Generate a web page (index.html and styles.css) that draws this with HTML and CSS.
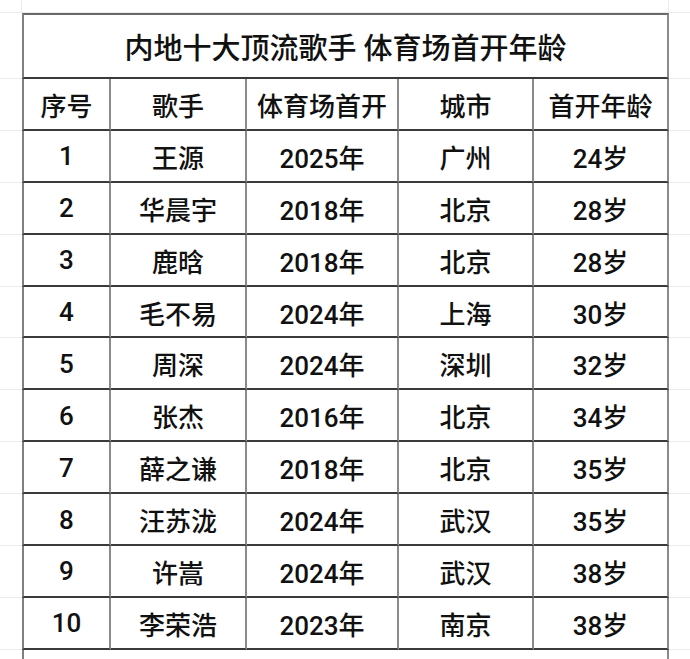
FILE: index.html
```html
<!DOCTYPE html>
<html lang="zh">
<head>
<meta charset="utf-8">
<link rel="stylesheet" href="styles.css">
</head>
<body>
<div class="sheet">
  <div class="row top"><div class="lead"></div><div class="edge"></div></div>
  <div class="row title-row"><div class="lead"></div><div class="cell title">内地十大顶流歌手 体育场首开年龄</div></div>
  <div class="row"><div class="lead"></div><div class="cell c1">序号</div><div class="cell c2">歌手</div><div class="cell c3">体育场首开</div><div class="cell c4">城市</div><div class="cell c5">首开年龄</div></div>
  <div class="row"><div class="lead"></div><div class="cell c1">1</div><div class="cell c2">王源</div><div class="cell c3">2025年</div><div class="cell c4">广州</div><div class="cell c5">24岁</div></div>
  <div class="row"><div class="lead"></div><div class="cell c1">2</div><div class="cell c2">华晨宇</div><div class="cell c3">2018年</div><div class="cell c4">北京</div><div class="cell c5">28岁</div></div>
  <div class="row"><div class="lead"></div><div class="cell c1">3</div><div class="cell c2">鹿晗</div><div class="cell c3">2018年</div><div class="cell c4">北京</div><div class="cell c5">28岁</div></div>
  <div class="row"><div class="lead"></div><div class="cell c1">4</div><div class="cell c2">毛不易</div><div class="cell c3">2024年</div><div class="cell c4">上海</div><div class="cell c5">30岁</div></div>
  <div class="row"><div class="lead"></div><div class="cell c1">5</div><div class="cell c2">周深</div><div class="cell c3">2024年</div><div class="cell c4">深圳</div><div class="cell c5">32岁</div></div>
  <div class="row"><div class="lead"></div><div class="cell c1">6</div><div class="cell c2">张杰</div><div class="cell c3">2016年</div><div class="cell c4">北京</div><div class="cell c5">34岁</div></div>
  <div class="row"><div class="lead"></div><div class="cell c1">7</div><div class="cell c2">薛之谦</div><div class="cell c3">2018年</div><div class="cell c4">北京</div><div class="cell c5">35岁</div></div>
  <div class="row"><div class="lead"></div><div class="cell c1">8</div><div class="cell c2">汪苏泷</div><div class="cell c3">2024年</div><div class="cell c4">武汉</div><div class="cell c5">35岁</div></div>
  <div class="row"><div class="lead"></div><div class="cell c1">9</div><div class="cell c2">许嵩</div><div class="cell c3">2024年</div><div class="cell c4">武汉</div><div class="cell c5">38岁</div></div>
  <div class="row"><div class="lead"></div><div class="cell c1">10</div><div class="cell c2">李荣浩</div><div class="cell c3">2023年</div><div class="cell c4">南京</div><div class="cell c5">38岁</div></div>
  <div class="row tail"><div class="lead"></div><div class="cell wide"></div></div>
</div>
</body>
</html>
```
FILE: styles.css
```css
html, body {
  margin: 0;
  padding: 0;
  background: #ffffff;
  overflow: hidden;
}
body {
  width: 690px;
  height: 659px;
  font-family: Roboto, "Noto Sans CJK SC", sans-serif;
  font-weight: 500;
  color: #111111;
}
.sheet {
  display: flex;
  flex-direction: column;
}
.row {
  display: flex;
  height: 51.9px;
  background: linear-gradient(to top, #ebebeb 1px, transparent 1px);
}
.row.top {
  height: 13px;
  background: linear-gradient(to top, #ebebeb 1px, transparent 1px),
              linear-gradient(to right, transparent 21px, #ececec 21px, #ececec 22px, transparent 22px);
}
.row.top .edge {
  width: 1px;
  margin-left: 646px;
  background: #ececec;
}
.row.title-row {
  height: 66px;
}
.row.tail {
  height: 40px;
}
.lead {
  width: 22px;
  flex: none;
}
.cell {
  box-sizing: border-box;
  flex: none;
  height: 100%;
  display: flex;
  align-items: center;
  justify-content: center;
  font-size: 26px;
  border-bottom: 2px solid #3a3a3a;
  border-right: 2px solid #8a8a8a;
  white-space: nowrap;
  padding-top: 1px;
}
.cell.c1 {
  width: 89px;
  border-left: 2px solid #808080;
}
.cell.c2 { width: 136px; }
.cell.c3 { width: 152px; }
.cell.c4 { width: 135px; }
.cell.c5 { width: 135px; }
.cell.title {
  width: 647px;
  border-left: 2px solid #808080;
  border-top: 2px solid #6a6a6a;
  font-size: 29px;
  padding-top: 0;
}
.cell.wide {
  width: 647px;
  border-left: 2px solid #808080;
  border-bottom: none;
}
```
